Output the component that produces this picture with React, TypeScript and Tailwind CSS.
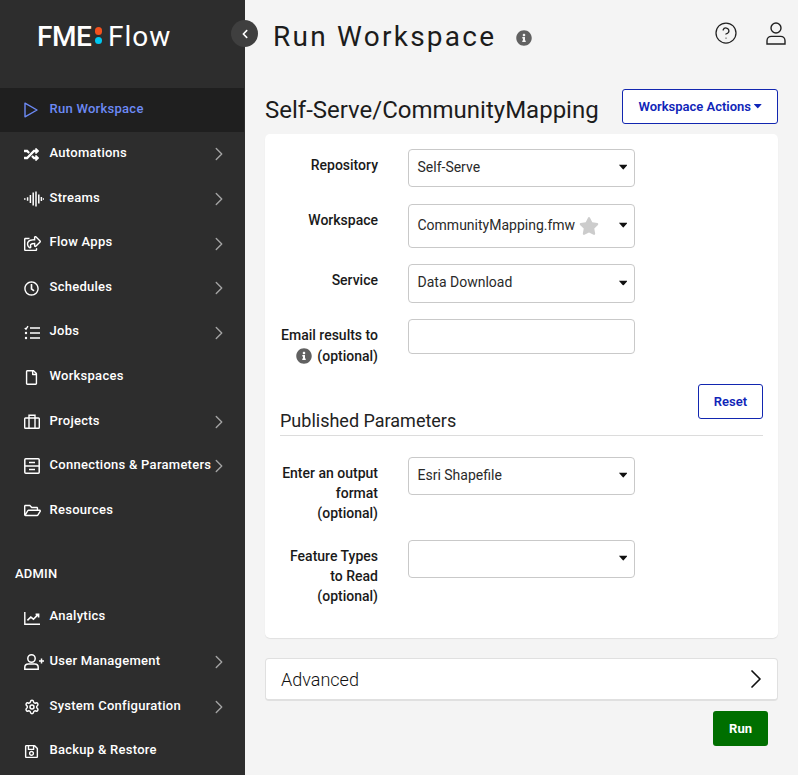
import React from "react";
import { ChevronRight, CircleHelp, Settings } from "lucide-react";
import { FaInfoCircle, FaStar, FaChevronLeft, FaRegShareSquare, FaRegClock, FaRegFile, FaRegFolderOpen, FaRegSave, FaRandom } from "react-icons/fa";

const base = { fill: "none", stroke: "currentColor" } as const;

function Caret({ w = 8.5 }: { w?: number }) {
  return (
    <svg viewBox="0 0 10 6" width={w} height={(w * 6) / 10} className="shrink-0">
      <path d="M0.3 0h9.4c.3 0 .4.3.2.5L5.2 5.8c-.1.1-.3.1-.4 0L.1.5C-.1.3 0 0 .3 0z" fill="currentColor" />
    </svg>
  );
}
function PlayIcon() {
  return <svg viewBox="0 0 14 16" width="14" height="16" {...base} strokeWidth="1.4"><path d="M1 1.2v13.6L13 8z" strokeLinejoin="round" /></svg>;
}
function StreamsIcon() {
  return (
    <svg viewBox="0 0 20 16" width="20" height="16" {...base} strokeWidth="1.5">
      <path d="M0.8 7.3v1.4M3.6 6.3v3.4M6.4 4v8M9.2 1.5v13M12 0.5v15M14.8 3.5v9M17.4 6v4M19.6 7.3v1.4" />
    </svg>
  );
}
function JobsIcon() {
  return (
    <svg viewBox="0 0 16 16" width="16" height="16" {...base} strokeWidth="1.6">
      <path d="M6 3h10M6 8h10M6 13h10" />
      <path d="M0.8 3l1.2 1.2L4 1.2" strokeWidth="1.4" />
      <circle cx="2" cy="8" r="1.2" fill="currentColor" stroke="none" />
      <circle cx="2" cy="13" r="1.2" fill="currentColor" stroke="none" />
    </svg>
  );
}
function ProjectsIcon() {
  return (
    <svg viewBox="0 0 16 15" width="16" height="15" {...base} strokeWidth="1.4">
      <rect x="0.7" y="4" width="14.6" height="10.3" rx="0.8" />
      <path d="M5 4V1.2h6V4M5 4v10M11 4v10" />
    </svg>
  );
}
function ConnIcon() {
  return (
    <svg viewBox="0 0 16 16" width="16" height="16" {...base} strokeWidth="1.5">
      <rect x="0.8" y="0.8" width="14.4" height="14.4" rx="1" />
      <path d="M1 8h14M5 4.4h6M5 11.6h6" />
    </svg>
  );
}
function AnalyticsIcon() {
  return (
    <svg viewBox="0 0 16 14" width="16" height="14" {...base} strokeWidth="1.4">
      <path d="M0.8 1v12.2H16" />
      <path d="M3.4 9.4l3.4-3.4 2.6 2.2 4.6-4.6M11.6 3.4h3v3" strokeWidth="1.6" />
    </svg>
  );
}
function UserAdd() {
  return (
    <svg viewBox="0 0 20 16" width="20" height="16" {...base} strokeWidth="1.5">
      <circle cx="7.5" cy="4.5" r="3.7" />
      <path d="M0.8 15.2v-2c0-2 1.6-3.3 3.4-3.3h6.6c1.8 0 3.4 1.3 3.4 3.3v2z" />
      <path d="M15 7h5M17.5 4.5v5" />
    </svg>
  );
}
function UserIcon() {
  return (
    <svg viewBox="0 0 20 23" width="20" height="23" {...base} strokeWidth="1.4" className="text-[#222]">
      <circle cx="10" cy="6" r="5" />
      <path d="M1 22h18v-3.2c0-2.6-2-4.4-4.4-4.4H5.4C3 14.4 1 16.2 1 18.8z" />
    </svg>
  );
}

function NavRow({ icon, label, active, arrow, lift = "mb-[2.9px]" }: { icon: React.ReactNode; label: string; active?: boolean; arrow?: boolean; lift?: string }) {
  return (
    <div className={`mr-px flex h-[44.55px] items-center pl-[24px] pr-[14px] ${active ? "bg-[#1f1f1f] text-[#6d8af5]" : "text-white"}`}>
      <span className="flex w-[25.5px] shrink-0 items-center">{icon}</span>
      <span className={`flex-1 whitespace-nowrap text-[13px] font-medium tracking-[0.27px] ${lift}`}>{label}</span>
      {arrow && <ChevronRight size={22} strokeWidth={1.5} className="-ml-[8px] text-[#a3a3a3]" />}
    </div>
  );
}

function Select({ value, h, star }: { value?: string; h: string; star?: boolean }) {
  return (
    <div className={`flex w-[227px] items-center rounded-[4px] border border-[#c9c9c9] bg-white pl-[8.5px] pr-[7px] text-[14px] text-[#2a2a2a] ${h}`}>
      <span className="whitespace-nowrap -translate-y-[1px]">{value}</span>
      {star && <FaStar size={20} className="ml-[4px] text-[#cccccc]" />}
      <span className="ml-auto text-[#111] -translate-y-[0.5px]"><Caret /></span>
    </div>
  );
}

function Label({ children }: { children: React.ReactNode }) {
  return <div className="w-[98px] shrink-0 pt-[6px] text-right text-[14px] font-medium leading-[20px] text-[#1a1a1a]">{children}</div>;
}

export default function App() {
  return (
    <div className="flex h-[775px] w-[798px] overflow-hidden bg-[#f4f4f4] font-['Roboto',sans-serif]">
      <aside className="relative w-[245px] shrink-0 bg-[#2d2d2d]">
        <div className="flex h-[87.6px] items-start pl-[37px] pt-[18px] text-white">
          <span className="text-[28px] font-medium leading-[38px] tracking-[-0.4px]">FME</span>
          <span className="ml-[3px] mt-[9px] flex flex-col gap-[2px]">
            <span className="h-[7.5px] w-[7.5px] rounded-full bg-[#f4511e]" />
            <span className="h-[7.5px] w-[7.5px] rounded-full bg-[#00c8f0]" />
          </span>
          <span className="ml-[6px] text-[28px] leading-[38px] tracking-[1px]">Flow</span>
        </div>
        <NavRow active label="Run Workspace" icon={<PlayIcon />} />
        <NavRow arrow label="Automations" icon={<FaRandom size={15} />} />
        <NavRow arrow label="Streams" icon={<StreamsIcon />} />
        <NavRow arrow label="Flow Apps" icon={<FaRegShareSquare size={17} />} />
        <NavRow arrow label="Schedules" icon={<FaRegClock size={15} />} />
        <NavRow arrow label="Jobs" icon={<JobsIcon />} />
        <NavRow label="Workspaces" icon={<FaRegFile size={15} />} />
        <NavRow arrow label="Projects" icon={<ProjectsIcon />} />
        <NavRow arrow label="Connections & Parameters" icon={<ConnIcon />} />
        <NavRow label="Resources" lift="mb-[2px]" icon={<FaRegFolderOpen size={17} />} />
        <div className="flex h-[62.25px] items-end pb-[11.35px] pl-[15px] text-[13px] font-medium tracking-[0.2px] text-white">ADMIN</div>
        <NavRow label="Analytics" lift="mb-[2.7px]" icon={<AnalyticsIcon />} />
        <NavRow arrow label="User Management" lift="mb-[2.7px]" icon={<UserAdd />} />
        <NavRow arrow label="System Configuration" lift="mb-[2.7px]" icon={<Settings size={16} strokeWidth={2.2} />} />
        <NavRow label="Backup & Restore" lift="mb-[2.7px]" icon={<FaRegSave size={15} />} />
        <button className="absolute left-[231px] top-[20px] flex h-[27px] w-[27px] items-center justify-center rounded-full bg-[#3f3f3f] text-white">
          <FaChevronLeft size={10} />
        </button>
      </aside>

      <main className="flex-1 pl-[20px] pr-[20px]">
        <header className="flex h-[89px] items-start">
          <h1 className="ml-[8px] mt-[18px] text-[28px] leading-[38px] tracking-[2.25px] text-[#1c1c1c]">Run Workspace</h1>
          <FaInfoCircle size={16} className="ml-[20px] mt-[30px] text-[#616161]" />
          <CircleHelp size={24} strokeWidth={1.25} className="ml-auto mt-[21px] text-[#222]" />
          <span className="ml-[28px] mt-[22px] -mr-[8px]"><UserIcon /></span>
        </header>
        <div className="flex h-[45px] items-start justify-between">
          <h2 className="mt-[5px] text-[24px] leading-[32px] text-[#1c1c1c]">Self-Serve/CommunityMapping</h2>
          <button className="flex h-[35px] w-[156px] items-center justify-center gap-[3px] rounded-[3px] border border-[#1226b0] bg-white text-[13px] font-semibold text-[#0f25b8]">
            Workspace Actions
            <Caret w={7.5} />
          </button>
        </div>
        <section className="rounded-[5px] bg-white px-[15px] pb-[32px] pt-[15px] shadow-[0_1px_1px_rgba(0,0,0,0.08)]">
          <div className="flex gap-[30px]">
            <Label>Repository</Label>
            <Select value="Self-Serve" h="h-[38px]" />
          </div>
          <div className="mt-[17px] flex gap-[30px]">
            <Label>Workspace</Label>
            <Select value="CommunityMapping.fmw" h="h-[44px]" star />
          </div>
          <div className="mt-[16px] flex gap-[30px]">
            <Label>Service</Label>
            <Select value="Data Download" h="h-[39px]" />
          </div>
          <div className="mt-[16px] flex gap-[30px]">
            <Label>
              Email results to
              <span className="mt-[1px] flex items-center justify-end gap-[5px]">
                <FaInfoCircle size={16} className="text-[#616161]" />
                (optional)
              </span>
            </Label>
            <div className="h-[35px] w-[227px] rounded-[4px] border border-[#c9c9c9] bg-white" />
          </div>
          <div className="mt-[18px] flex h-[52px] items-end justify-between border-b border-[#dcdcdc]">
            <h3 className="pb-[2px] text-[18px] leading-[24px] text-[#222]">Published Parameters</h3>
            <button className="mb-[16px] h-[35px] w-[65px] rounded-[3px] border border-[#1226b0] bg-white text-[13px] font-semibold text-[#0f25b8]">Reset</button>
          </div>
          <div className="mt-[21px] flex gap-[30px]">
            <Label>Enter an output format (optional)</Label>
            <Select value="Esri Shapefile" h="h-[38px]" />
          </div>
          <div className="mt-[17px] flex gap-[30px]">
            <Label>Feature Types to Read (optional)</Label>
            <Select h="h-[38px]" />
          </div>
        </section>
        <div className="mt-[20px] flex h-[43px] items-center justify-between rounded-[4px] border border-b-2 border-[#e0e0e0] bg-white pl-[15px] pr-[14px]">
          <span className="text-[18px] font-light text-[#111]">Advanced</span>
          <ChevronRight size={32} strokeWidth={1.3} className="-mr-[8.5px] text-[#111]" />
        </div>
        <div className="mt-[10px] flex justify-end pr-[10px]">
          <button className="h-[35px] w-[55px] rounded-[3px] bg-[#006f00] text-[13px] font-bold text-white">Run</button>
        </div>
      </main>
    </div>
  );
}
